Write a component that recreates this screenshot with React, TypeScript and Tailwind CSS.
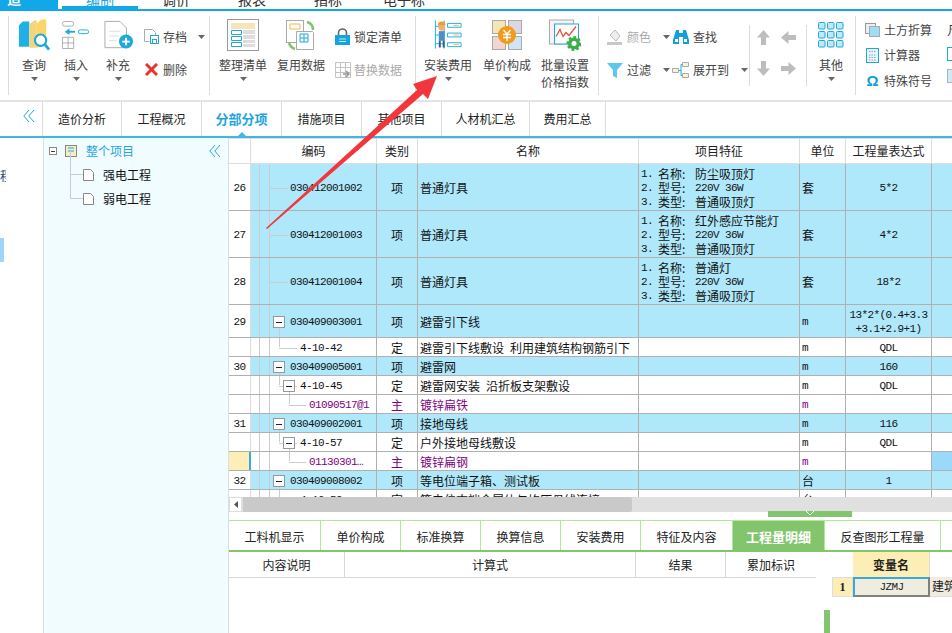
import type { ReactNode } from 'react';

const Caret = ({ className = '' }: { className?: string }) => (
	<svg width="7" height="4" viewBox="0 0 7 4" className={className}>
		<path d="M0 0h7L3.5 4z" fill="#666" />
	</svg>
);

const BookIcon = () => (
	<svg width="32" height="33" viewBox="0 0 34 34">
		<path d="M1 6l4-4h7v27H1z" fill="#1fb0e6" />
		<path d="M12 5l5-4h3v29h-8z" fill="#f3d67c" />
		<path d="M20 4l5-4h5v27l-10 3z" fill="#fbd568" />
		<circle cx="24" cy="22" r="6" fill="#fff" stroke="#1fa8dc" strokeWidth="2.2" />
		<path d="M28 26l5 6" stroke="#1fa8dc" strokeWidth="3" />
	</svg>
);

const InsertIcon = () => (
	<svg width="30" height="28" viewBox="0 0 32 30" fill="none">
		<rect x="1.5" y="0.5" width="12" height="5" rx="2.5" stroke="#aaa" />
		<rect x="18.5" y="9.5" width="11" height="4" rx="2" stroke="#1fa8dc" />
		<path d="M6 11.5h9" stroke="#1fa8dc" strokeWidth="2" />
		<path d="M9 8l-5 3.500L9 15z" fill="#1fa8dc" />
		<path d="M1.500 17.500h12v12h-12zM1.500 23.500h12M7.500 17.500v12" stroke="#aaa" />
	</svg>
);

const PlusDocIcon = () => (
	<svg width="31" height="30" viewBox="0 0 32 32" fill="none">
		<path d="M1.500 1.500h16l7 7v21h-23z" fill="#fff" stroke="#aaa" />
		<path d="M6 12h12M6 17h10M6 22h8" stroke="#ddd" />
		<circle cx="24" cy="23" r="7.500" fill="#1fa8dc" />
		<path d="M24 19v8M20 23h8" stroke="#fff" strokeWidth="2" />
	</svg>
);

const SaveDocIcon = () => (
	<svg width="17" height="17" viewBox="0 0 17 17" fill="none">
		<path d="M1.500 1.500h8l3 3v3M1.500 1.500v12h5" stroke="#aaa" />
		<rect x="7.500" y="7.500" width="8" height="8" stroke="#1fa8dc" />
		<rect x="9.500" y="11.500" width="4" height="4" stroke="#1fa8dc" />
	</svg>
);

const ListIcon = () => (
	<svg width="32" height="32" viewBox="0 0 32 32" fill="none">
		<rect x="0.500" y="0.500" width="31" height="31" fill="#fff" stroke="#999" />
		<rect x="4" y="4" width="24" height="6" fill="#f5e6b8" />
		<rect x="16" y="11" width="12" height="17" fill="#ddd" />
		<path d="M4.500 11.500h10v4h-10zM4.500 17.500h10v4h-10zM4.500 23.500h10v4h-10z" stroke="#1fa8dc" />
		<path d="M16 15.500h12M16 20.500h12M16 24.500h12" stroke="#fff" />
	</svg>
);

const ReuseIcon = () => (
	<svg width="32" height="32" viewBox="0 0 32 32" fill="none">
		<rect x="1.500" y="1.500" width="17" height="22" fill="#fff" stroke="#aaa" />
		<path d="M5 5h10v5H5z" stroke="#f0b848" />
		<path d="M11.500 12.500h16l1 1v17h-17z" fill="#fff" stroke="#aaa" />
		<path d="M15 15h8v8h-8zM19 15v8M15 19h8" stroke="#1fa8dc" />
		<path d="M22 3c4 1 6 4 6 8" stroke="#7fc46a" strokeWidth="2.500" />
		<path d="M4 24c1 3 3 5 6 6" stroke="#7fc46a" strokeWidth="2.500" />
	</svg>
);

const LockIcon = () => (
	<svg width="15" height="17" viewBox="0 0 15 17" fill="none">
		<path d="M3.500 8V5a4 4 0 018 0v3" stroke="#666" strokeWidth="1.600" />
		<rect x="0" y="7" width="15" height="10" fill="#12a5e0" />
		<path d="M4 11h7M4 13.500h7" stroke="#bde8f8" />
	</svg>
);

const ReplaceIcon = () => (
	<svg width="16" height="16" viewBox="0 0 16 16" fill="none">
		<path d="M.5.5h15v15H.5zM.5 5.500h15M.5 10.500h15M5.500.5v15M10.500.5v15" stroke="#c4c4c4" />
		<path d="M8 12h5M11 9l3 3-3 3" stroke="#999" strokeWidth="1.500" />
	</svg>
);

const WorkerIcon = () => (
	<svg width="29" height="30" viewBox="0 0 30 30" fill="none">
		<path d="M1.500 0v29M10.500 0v29M1.500 6h9M1.500 15h9M1.500 24h9" stroke="#1fb0e6" />
		<circle cx="8" cy="7" r="3.500" fill="#f0b070" />
		<path d="M4 5a4 4 0 018 0z" fill="#f39a2c" />
		<path d="M5 11h6v10H5z" fill="#4a8fc8" />
		<path d="M5 21h2v7H5zM9 21h2v7H9z" fill="#2c5f8a" />
		<path d="M14 3h14v4H14zM14 13h14v4H14zM14 23h14v4H14z" stroke="#1fb0e6" />
		<path d="M20 5h6M20 15h6M20 25h6" stroke="#f0b848" />
	</svg>
);

const PriceIcon = () => (
	<svg width="30" height="30" viewBox="0 0 30 30" fill="none">
		<rect x="0.500" y="0.500" width="13" height="13" fill="#f5e6b8" stroke="#aaa" />
		<rect x="16.500" y="0.500" width="13" height="13" fill="#ddd6e0" stroke="#aaa" />
		<rect x="0.500" y="16.500" width="13" height="13" fill="#f0d6d0" stroke="#aaa" />
		<rect x="16.500" y="16.500" width="13" height="13" fill="#cfe6f2" stroke="#aaa" />
		<circle cx="15" cy="15" r="9" fill="#f39a1c" />
		<path d="M11.500 10l3.500 4 3.500-4M11 14.500h8M11 17.500h8M15 14v7" stroke="#fff" strokeWidth="1.400" />
	</svg>
);

const ChartIcon = () => (
	<svg width="32" height="33" viewBox="0 0 32 32" fill="none">
		<rect x="0.500" y="0.500" width="24" height="24" fill="#f4f4f4" stroke="#aaa" />
		<rect x="5.500" y="4.500" width="24" height="20" fill="#fff" stroke="#1fa8dc" />
		<path d="M7 17l4-7 3 7 3-4 3 3 7-9" stroke="#e8523a" strokeWidth="1.300" />
		<circle cx="25" cy="24" r="6" fill="#3eae4c" />
		<circle cx="25" cy="24" r="6" stroke="#3eae4c" strokeWidth="3" strokeDasharray="2.500 2" />
		<circle cx="25" cy="24" r="2.500" fill="#fff" />
	</svg>
);

const BucketIcon = () => (
	<svg width="16" height="17" viewBox="0 0 16 17" fill="none">
		<path d="M3 7l5-5 5 6-4 5z" fill="#eee" stroke="#bbb" />
		<path d="M0 14h15v3H0z" fill="#c8c8c8" />
	</svg>
);

const BinocularIcon = () => (
	<svg width="16" height="16" viewBox="0 0 16 16">
		<path d="M3 1h3v3h4V1h3l3 10v4H10V8H6v7H0v-4z" fill="#12a0dc" />
		<rect x="2" y="10" width="3" height="3" fill="#fff" />
		<rect x="11" y="10" width="3" height="3" fill="#fff" />
	</svg>
);

const FilterIcon = () => (
	<svg width="16" height="16" viewBox="0 0 16 16">
		<path d="M0 1h16L10 8v8l-4-2V8z" fill="#5cc8f0" />
	</svg>
);

const ExpandIcon = () => (
	<svg width="17" height="16" viewBox="0 0 17 16" fill="none">
		<path d="M.5 6.500h6v4h-6zM10.500.5h6v4h-6zM10.500 11.500h6v4h-6z" stroke="#aaa" fill="#f8f0d8" />
		<path d="M7 8.500h2M9 2.500v11M9 2.500h1M9 13.500h1" stroke="#1fa8dc" />
	</svg>
);

const Arrow = ({ dir }: { dir: 'up' | 'down' | 'left' | 'right' }) => {
	const rot = { up: 0, right: 90, down: 180, left: 270 }[dir];
	return (
		<svg width="15" height="15" viewBox="0 0 15 15" style={{ transform: `rotate(${rot}deg)` }}>
			<path d="M7.500 0L14 7.500H10V15H5V7.500H1z" fill="#bdbdbd" />
		</svg>
	);
};

const GridNineIcon = () => (
	<svg width="26" height="26" viewBox="0 0 26 26" fill="#bfe8f8" stroke="#1fa8dc">
		{[0, 9, 18].map((y) =>
			[0, 9, 18].map((x) => (
				<rect key={`${x}-${y}`} x={x + 0.5} y={y + 0.5} width="6.500" height="6.500" rx="1" />
			)),
		)}
	</svg>
);

const EarthIcon = () => (
	<svg width="15" height="14" viewBox="0 0 15 14" fill="none">
		<rect x="0.500" y="0.500" width="10" height="10" fill="#eee" stroke="#999" />
		<rect x="4.500" y="3.500" width="10" height="10" fill="#9fdcf5" stroke="#aaa" />
	</svg>
);

const CalcIcon = () => (
	<svg width="13" height="15" viewBox="0 0 13 15" fill="none">
		<rect x="0.500" y="0.500" width="12" height="14" fill="#e8f6fc" stroke="#1fa8dc" />
		<path d="M3 3.500h7M3 7h7M3 9.500h7M3 12h7" stroke="#8aa8c8" strokeDasharray="1.500 1" />
	</svg>
);

const BigBtn = ({ icon, label, w, caret = true, second }: { icon: ReactNode; label: string; w: string; caret?: boolean; second?: string }) => (
	<div className={`${w} flex flex-col items-center shrink-0`}>
		<div className="h-[34px] flex items-center justify-center">{icon}</div>
		<div className="mt-[4px] h-[17px] leading-[17px] whitespace-nowrap text-[#444]">{label}</div>
		{second && <div className="h-[17px] leading-[17px] whitespace-nowrap text-[#444]">{second}</div>}
		{caret && <Caret className="mt-[4px]" />}
	</div>
);

const SmallBtn = ({ icon, label, caret, faint, gap = 'gap-[3px]' }: { icon: ReactNode; label: string; caret?: string; faint?: boolean; gap?: string }) => (
	<div className={`flex items-center h-[17px] ${gap}`}>
		<div className="w-[17px] flex justify-center shrink-0">{icon}</div>
		<span className={`whitespace-nowrap ${faint ? 'text-[#aaa]' : 'text-[#444]'}`}>{label}</span>
		{caret && <Caret className={caret} />}
	</div>
);

const Sep = () => <div className="w-px h-[79px] bg-[#dcdcdc] shrink-0 mt-[5px]" />;
const ShortSep = () => <div className="w-px h-[61px] bg-[#dcdcdc] mt-[14px] shrink-0" />;

const Ribbon = () => (
	<div className="h-[91px] shrink-0 border-b-2 border-[#e3e3e3] flex items-start pl-[8px] text-[12px] bg-white overflow-hidden">
		<Sep />
		<div className="w-[200px] shrink-0 flex pt-[7px] pl-[4px]">
			<BigBtn w="w-[42px]" icon={<BookIcon />} label="查询" />
			<BigBtn w="w-[42px]" icon={<InsertIcon />} label="插入" />
			<BigBtn w="w-[42px]" icon={<PlusDocIcon />} label="补充" />
			<div className="flex flex-col gap-[16px] pt-[10px] pl-[4px]">
				<SmallBtn icon={<SaveDocIcon />} label="存档" caret="ml-[8px]" />
				<SmallBtn icon={<svg width="13" height="13" viewBox="0 0 13 13"><path d="M1 1l11 11M12 1L1 12" stroke="#e8332e" strokeWidth="3" /></svg>} label="删除" />
			</div>
		</div>
		<Sep />
		<div className="w-[205px] shrink-0 flex pt-[7px] pl-[8px]">
			<BigBtn w="w-[50px]" icon={<ListIcon />} label="整理清单" />
			<BigBtn w="w-[66px]" icon={<ReuseIcon />} label="复用数据" caret={false} />
			<div className="flex flex-col gap-[16px] pt-[10px]">
				<SmallBtn icon={<LockIcon />} label="锁定清单" />
				<SmallBtn icon={<ReplaceIcon />} label="替换数据" faint />
			</div>
		</div>
		<Sep />
		<div className="w-[182px] shrink-0 flex pt-[7px] pl-[6px]">
			<BigBtn w="w-[52px]" icon={<WorkerIcon />} label="安装费用" />
			<BigBtn w="w-[66px]" icon={<PriceIcon />} label="单价构成" />
			<BigBtn w="w-[50px]" icon={<ChartIcon />} label="批量设置" second="价格指数" caret={false} />
		</div>
		<Sep />
		<div className="w-[150px] shrink-0 flex pt-[17px] pl-[7px]">
			<div className="flex flex-col gap-[16px] w-[66px] shrink-0">
				<SmallBtn icon={<BucketIcon />} label="颜色" faint caret="ml-[8px]" gap="gap-[4px]" />
				<SmallBtn icon={<FilterIcon />} label="过滤" caret="ml-[8px]" gap="gap-[4px]" />
			</div>
			<div className="flex flex-col gap-[16px]">
				<SmallBtn icon={<BinocularIcon />} label="查找" gap="gap-[4px]" />
				<SmallBtn icon={<ExpandIcon />} label="展开到" caret="ml-[8px]" gap="gap-[4px]" />
			</div>
		</div>
		<ShortSep />
		<div className="w-[56px] shrink-0 grid grid-cols-[15px_15px] gap-x-[10px] gap-y-[16px] pt-[19px] pl-[6px]">
			<Arrow dir="up" />
			<Arrow dir="left" />
			<Arrow dir="down" />
			<Arrow dir="right" />
		</div>
		<ShortSep />
		<div className="w-[48px] shrink-0 pt-[7px]">
			<BigBtn w="w-[48px]" icon={<GridNineIcon />} label="其他" />
		</div>
		<Sep />
		<div className="flex flex-col gap-[8.5px] pt-[10px] pl-[8px] shrink-0">
			<SmallBtn icon={<EarthIcon />} label="土方折算" />
			<SmallBtn icon={<CalcIcon />} label="计算器" />
			<SmallBtn icon={<span className="text-[15px] font-bold leading-none text-[#12a0dc] font-['Liberation_Sans']">Ω</span>} label="特殊符号" />
		</div>
		<div className="flex flex-col gap-[8.5px] pt-[10px] pl-[15px] shrink-0">
			<span className="h-[17px] leading-[17px] text-[#333]">凡</span>
			<div className="w-[12px] h-[14px] border border-[#1fa8dc]" />
			<div className="w-[12px] h-[14px] border border-[#9fb8c8] bg-[#cfeaf5]" />
		</div>
	</div>
);

const tabs = [
	{ t: '造价分析', w: 'w-[80px]' },
	{ t: '工程概况', w: 'w-[80px]' },
	{ t: '分部分项', w: 'w-[80px]', on: true },
	{ t: '措施项目', w: 'w-[80px]' },
	{ t: '其他项目', w: 'w-[80px]' },
	{ t: '人材机汇总', w: 'w-[88px]' },
	{ t: '费用汇总', w: 'w-[76px]' },
];

const TabBar = () => (
	<div className="h-[36px] flex shrink-0 text-[12px] border-b-2 border-[#3fb6e4] bg-white pl-[42px]">
		{tabs.map((t, i) => (
			<div key={t.t} className={`${t.w} relative flex items-center justify-center border-r border-[#ddd] ${i === 0 ? 'border-l' : ''} ${t.on ? 'text-[#1ea5e0] font-bold text-[13px]' : 'text-[#222]'}`}>
				{t.t}
				{t.on && (
					<svg width="8" height="4" viewBox="0 0 8 4" className="absolute bottom-0 left-1/2 -translate-x-1/2">
						<path d="M0 4l4-4 4 4z" fill="#3fb6e4" />
					</svg>
				)}
			</div>
		))}
	</div>
);

const ChevronsLeft = ({ className = '' }: { className?: string }) => (
	<svg width="12" height="12" viewBox="0 0 12 12" fill="none" stroke="#1fa8dc" className={className}>
		<path d="M6 0L.8 6 6 12M11 0L5.800 6 11 12" />
	</svg>
);

const Collapse = ({ className = '' }: { className?: string }) => (
	<div className={`w-[12px] h-[12px] border border-[#999] bg-white flex items-center justify-center shrink-0 ${className}`}>
		<div className="w-[6px] h-px bg-[#222]" />
	</div>
);

const PageIcon = () => (
	<svg width="11" height="12" viewBox="0 0 11 12" fill="none" className="shrink-0">
		<path d="M.5.5h7l3 3v8h-10z" fill="#fff" stroke="#888" />
	</svg>
);

const Tree = () => (
	<div className="w-[186px] shrink-0 bg-[#f0fcff] border-l border-r border-[#ddd] relative text-[12px]">
		<div className="h-[26px] flex items-center pl-[5px] gap-[9px] text-[#2aa6dc]">
			<div className="w-[8px] h-[8px] border border-[#888] bg-white flex items-center justify-center">
				<div className="w-[4px] h-px bg-[#444]" />
			</div>
			<svg width="12" height="12" viewBox="0 0 12 12" fill="none" className="-ml-[1px]">
				<rect x="0.500" y="0.500" width="11" height="11" fill="#f6eec8" stroke="#888" />
				<path d="M3 3h6M3 6h6" stroke="#1fa8dc" />
			</svg>
			<span>整个项目</span>
			<ChevronsLeft className="ml-auto mr-[7px]" />
		</div>
		{['强电工程', '弱电工程'].map((t) => (
			<div key={t} className="h-[24px] -translate-y-px flex items-center pl-[26px] text-[#111]">
				<div className="w-[13px] h-[24px] relative shrink-0">
					<div className="absolute left-0 top-[-12px] bottom-[12px] w-px bg-[#ccc]" />
					<div className="absolute left-0 top-[11px] w-[13px] h-px bg-[#ccc]" />
				</div>
				<PageIcon />
				<span className="ml-[9px]">{t}</span>
			</div>
		))}
	</div>
);

type Row = { h: string; no?: string; code: string; type: string; name?: string; feat?: string; unit?: string; qty?: string[]; blue?: boolean; purple?: boolean; lvl: number; sel?: boolean; box?: boolean };

const rows: Row[] = [
	{ h: 'h-[47px]', no: '26', code: '030412001002', type: '项', name: '普通灯具', feat: '防尘吸顶灯', unit: '套', qty: ['5*2'], blue: true, lvl: 0 },
	{ h: 'h-[47px]', no: '27', code: '030412001003', type: '项', name: '普通灯具', feat: '红外感应节能灯', unit: '套', qty: ['4*2'], blue: true, lvl: 0 },
	{ h: 'h-[47px]', no: '28', code: '030412001004', type: '项', name: '普通灯具', feat: '普通灯', unit: '套', qty: ['18*2'], blue: true, lvl: 0 },
	{ h: 'h-[33px]', no: '29', code: '030409003001', type: '项', name: '避雷引下线', unit: 'm', qty: ['13*2*(0.4+3.3', '+3.1+2.9+1)'], blue: true, lvl: 1, box: true },
	{ h: 'h-[19px]', code: '4-10-42', type: '定', name: '避雷引下线敷设\u2002利用建筑结构钢筋引下', unit: 'm', qty: ['QDL'], lvl: 2 },
	{ h: 'h-[19px]', no: '30', code: '030409005001', type: '项', name: '避雷网', unit: 'm', qty: ['160'], blue: true, lvl: 1, box: true },
	{ h: 'h-[19px]', code: '4-10-45', type: '定', name: '避雷网安装\u2002沿折板支架敷设', unit: 'm', qty: ['QDL'], lvl: 2, box: true },
	{ h: 'h-[19px]', code: '01090517@1', type: '主', name: '镀锌扁铁', unit: 'm', purple: true, lvl: 3 },
	{ h: 'h-[19px]', no: '31', code: '030409002001', type: '项', name: '接地母线', unit: 'm', qty: ['116'], blue: true, lvl: 1, box: true },
	{ h: 'h-[19px]', code: '4-10-57', type: '定', name: '户外接地母线敷设', unit: 'm', qty: ['QDL'], lvl: 2, box: true },
	{ h: 'h-[19px]', code: '01130301…', type: '主', name: '镀锌扁钢', unit: 'm', purple: true, lvl: 3, sel: true },
	{ h: 'h-[19px]', no: '32', code: '030409008002', type: '项', name: '等电位端子箱、测试板', unit: '台', qty: ['1'], blue: true, lvl: 1, box: true },
	{ h: 'h-[19px]', code: '4-10-58', type: '定', name: '等电位末端金属体与均压母线连接', unit: '台', lvl: 2 },
];

const mono = "font-['Liberation_Mono','Noto_Sans_CJK_SC',monospace] text-[11px] tracking-[-0.6px]";
const pads = ['pl-[39px]', 'pl-[39px]', 'pl-[49px]', 'pl-[58px]'];

const CodeCell = ({ r }: { r: Row }) => (
	<div className={`w-[126px] shrink-0 h-full border-r border-[#b0b0b0] relative flex items-center pt-[2px] ${pads[r.lvl]} ${r.purple ? 'text-[#800080]' : ''}`}>
		<div className="absolute left-[8px] top-0 bottom-0 w-px bg-[#ccc]" />
		<div className="absolute left-[18px] top-0 bottom-0 w-px bg-[#ccc]" />
		{r.lvl === 0 && <div className="absolute left-[19px] w-[18px] h-px bg-[#ccc]" />}
		{r.lvl === 1 && <div className="absolute left-[28px] top-1/2 bottom-0 w-px bg-[#ccc]" />}
		{r.lvl === 1 && <Collapse className="absolute left-[22px]" />}
		{r.lvl === 2 && <div className="absolute left-[28px] top-0 bottom-1/2 w-px bg-[#ccc]" />}
		{r.lvl === 2 && <div className="absolute left-[28px] w-[18px] h-px bg-[#ccc]" />}
		{r.lvl === 2 && r.box && <div className="absolute left-[38px] top-1/2 bottom-0 w-px bg-[#ccc]" />}
		{r.lvl === 2 && r.box && <Collapse className="absolute left-[32px]" />}
		{r.lvl === 3 && <div className="absolute left-[38px] top-0 bottom-1/2 w-px bg-[#ccc]" />}
		{r.lvl === 3 && <div className="absolute left-[38px] w-[17px] h-px bg-[#ccc]" />}
		<span className={`${mono} whitespace-nowrap relative`}>{r.code}</span>
	</div>
);

const Head = ({ w, t }: { w: string; t: string }) => (
	<div className={`${w} shrink-0 h-full flex items-center justify-center border-r border-[#ddd]`}>{t}</div>
);

const FeatLine = ({ n, label, children }: { n: string; label: string; children: ReactNode }) => (
	<div className="flex h-[14px] leading-[14px]">
		<span className={`${mono} w-[17px] shrink-0`}>{n}.</span>
		<span className="w-[37px] shrink-0">{label}:</span>
		{children}
	</div>
);

const TableRow = ({ r }: { r: Row }) => (
	<div className={`${r.h} flex shrink-0 border-b border-[#b0b0b0] text-[12px] leading-[14px] text-[#111]`}>
		<div className={`w-[22px] shrink-0 h-full flex items-center justify-center pt-[2px] ${r.sel ? 'bg-[#fdeeb5] border-r-2 border-[#3aa8d8]' : 'bg-white border-r border-[#ddd]'} ${mono}`}>{r.no}</div>
		<div className={`flex flex-1 h-full ${r.blue ? 'bg-[#afe8fb]' : 'bg-white'}`}>
			<CodeCell r={r} />
			<div className={`w-[41px] shrink-0 h-full border-r border-[#b0b0b0] flex items-center justify-center pt-[2px] ${r.purple ? 'text-[#800080]' : ''}`}>{r.type}</div>
			<div className={`w-[221px] shrink-0 h-full border-r border-[#b0b0b0] flex items-center pl-[2px] pt-[2px] whitespace-nowrap overflow-hidden ${r.purple ? 'text-[#800080]' : ''}`}>{r.name}</div>
			<div className="w-[161px] shrink-0 h-full border-r border-[#b0b0b0] flex flex-col justify-center pl-[2px] pt-[2px] whitespace-nowrap">
				{r.feat && (
					<>
						<FeatLine n="1" label="名称">{r.feat}</FeatLine>
						<FeatLine n="2" label="型号"><span className={mono}>220V 36W</span></FeatLine>
						<FeatLine n="3" label="类型">普通吸顶灯</FeatLine>
					</>
				)}
			</div>
			<div className={`w-[46px] shrink-0 h-full border-r border-[#b0b0b0] flex items-center pl-[2px] pt-[2px] ${r.purple ? 'text-[#800080]' : ''}`}>
				{r.unit === 'm' ? <span className={mono}>m</span> : r.unit}
			</div>
			<div className={`w-[86px] shrink-0 h-full border-r border-[#b0b0b0] flex flex-col items-center justify-center pt-[2px] ${mono}`}>
				{r.qty?.map((q) => <div key={q}>{q}</div>)}
			</div>
			<div className={`flex-1 h-full ${r.sel ? 'bg-[#9bd9fb]' : ''}`} />
		</div>
	</div>
);

const Grid = () => (
	<div className="h-[374px] relative shrink-0 overflow-hidden flex flex-col bg-white">
		<div className="h-[26px] flex shrink-0 border-b border-[#ddd] border-t text-[12px] text-[#222] leading-none">
			<Head w="w-[22px]" t="" />
			<Head w="w-[126px]" t="编码" />
			<Head w="w-[41px]" t="类别" />
			<Head w="w-[221px]" t="名称" />
			<Head w="w-[161px]" t="项目特征" />
			<Head w="w-[46px]" t="单位" />
			<Head w="w-[86px]" t="工程量表达式" />
		</div>
		{rows.map((r) => <TableRow key={r.code} r={r} />)}
		<div className="absolute left-0 right-0 bottom-0 h-[15px] bg-[#e0e0e0] flex">
			<div className="w-[13px] h-full bg-white flex items-center justify-center border border-[#ddd]">
				<svg width="4" height="7" viewBox="0 0 4 7"><path d="M4 0v7L0 3.500z" fill="#555" /></svg>
			</div>
			<div className="w-[389px] ml-px h-full bg-[#c9c9c9] rounded-r-[2px]" />
		</div>
	</div>
);

const bottomTabs = [
	{ t: '工料机显示', w: 'w-[92px]' },
	{ t: '单价构成', w: 'w-[80px]' },
	{ t: '标准换算', w: 'w-[80px]' },
	{ t: '换算信息', w: 'w-[80px]' },
	{ t: '安装费用', w: 'w-[80px]' },
	{ t: '特征及内容', w: 'w-[92px]' },
	{ t: '工程量明细', w: 'w-[92px]', on: true },
	{ t: '反查图形工程量', w: 'w-[116px]' },
];

const Lower = () => (
	<div className="flex-1 bg-white relative text-[12px] text-[#222]">
		<div className="absolute -top-px left-[539px] w-[84px] h-[6px] bg-[#82c56c] flex justify-center">
			<svg width="10" height="6" viewBox="0 0 10 6" fill="none" stroke="#fff"><path d="M1 0l4 4 4-4" /></svg>
		</div>
		<div className="h-[8px]" />
		<div className="h-[32px] flex border-t border-[#b3e69a] border-b-2 border-b-[#82c56c]">
			{bottomTabs.map((t) => (
				<div key={t.t} className={`${t.w} shrink-0 flex items-center justify-center pt-[2px] border-r border-[#b3e69a] ${t.on ? 'bg-[#82c56c] text-white font-bold text-[13px]' : ''}`}>{t.t}</div>
			))}
		</div>
		<div className="flex">
			<div className="w-[587px] shrink-0">
				<div className="h-[26px] flex border-b border-[#d8d8d8]">
					<div className="w-[116px] flex items-center justify-center border-r border-[#d8d8d8]">内容说明</div>
					<div className="w-[291px] flex items-center justify-center border-r border-[#d8d8d8]">计算式</div>
					<div className="w-[90px] flex items-center justify-center border-r border-[#d8d8d8]">结果</div>
					<div className="w-[90px] flex items-center justify-center">累加标识</div>
				</div>
			</div>
			<div className="ml-[8px] flex-1">
				<div className="flex h-[25px] pl-[8px]">
					<div className="w-[21px]" />
					<div className="w-[77px] bg-[#fdeeb5] border-r border-[#ddd] flex items-center justify-center font-bold">变量名</div>
				</div>
				<div className="flex h-[20px] pl-[8px]">
					<div className="w-[21px] bg-[#fdeeb5] border border-[#ddd] flex items-center justify-center font-bold font-['Liberation_Serif']">1</div>
					<div className={`w-[77px] bg-[#efede0] border-t-2 border-t-[#3aa8d8] border-l-2 border-l-[#3aa8d8] border-b-2 border-b-[#808080] border-r-2 border-r-[#808080] flex items-center justify-center ${mono}`}>JZMJ</div>
					<div className="flex-1 bg-[#efede0] border-b border-[#ddd] pl-[2px] leading-[18px] whitespace-nowrap overflow-hidden">建筑</div>
				</div>
				<div className="w-[6px] h-[23px] mt-[13px] bg-[#82c56c]" />
			</div>
		</div>
	</div>
);

const App = () => (
	<div className="w-[952px] h-[633px] overflow-hidden relative bg-white flex flex-col font-['Noto_Sans_CJK_SC',sans-serif]">
		<div className="h-[11px] shrink-0 flex border-b-[2px] border-[#12a8e8] bg-white text-[14px] text-[#333]">
			<div className="w-[58px] bg-[#12a8e8] text-white font-bold pl-[7px] leading-[1] -mt-[9px] h-[18px]">造</div>
			<div className="w-[76px] ml-[4px] border-b-[3px] border-[#12a8e8] -mt-[9px] h-[18px] text-center text-[#1ea5e0] leading-[16px]">编制</div>
			{[['w-[76px]', '调价'], ['w-[76px]', '报表'], ['w-[76px]', '指标'], ['w-[76px]', '电子标']].map(([w, t]) => (
				<div key={t} className={`${w} -mt-[9px] h-[18px] text-center leading-[16px] overflow-hidden`}>{t}</div>
			))}
		</div>
		<Ribbon />
		<TabBar />
		<div className="flex flex-1 min-h-0">
			<div className="w-[43px] shrink-0 bg-white relative">
				<ChevronsLeft className="absolute left-[23px] -top-[28px]" />
				<div className="absolute left-0 top-[32px] text-[12px] text-[#1a4a80] w-[6px] overflow-hidden leading-none">程</div>
				<div className="absolute left-0 top-[100px] w-[4px] h-[24px] bg-[#9fd4fb]" />
			</div>
			<Tree />
			<div className="flex-1 min-w-0 flex flex-col">
				<Grid />
				<Lower />
			</div>
		</div>
		<svg width="952" height="633" className="absolute left-0 top-0 pointer-events-none">
			<path d="M266 228L417 90L413 84L437 76L428 99L423 94L267 229z" fill="#f2363c" />
		</svg>
	</div>
);

export default App;
